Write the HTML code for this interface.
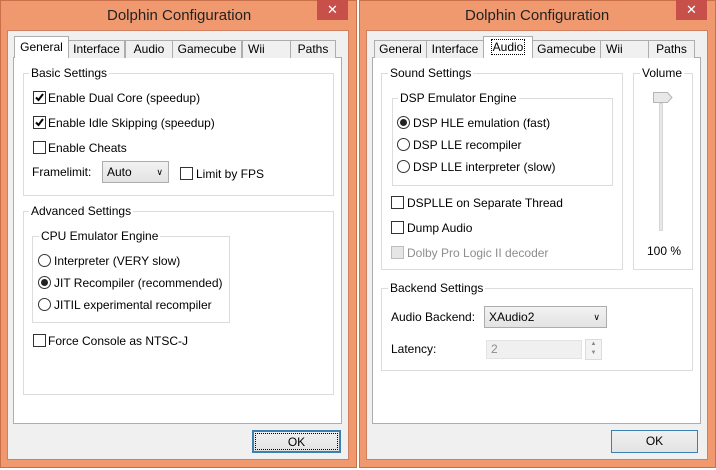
<!DOCTYPE html>
<html><head><meta charset="utf-8"><style>
*{box-sizing:border-box;margin:0;padding:0}
body{width:716px;height:470px;background:#fff;position:relative;overflow:hidden;font-family:"Liberation Sans",sans-serif;font-size:12px;color:#000}
.a{position:absolute}
.win{position:absolute;background:#f0996f;border:1px solid #c9704a}
.cl{position:absolute;background:#f0f0f0;border:1px solid #d08060}
.title{position:absolute;font-size:15px;color:#222;white-space:nowrap}
.close{position:absolute;background:#c7504a;color:#fff;text-align:center;font-size:13px;line-height:20px}
.panel{position:absolute;background:#fff;border:1px solid #adadad}
.tab{position:absolute;background:#f0f0f0;border:1px solid #adadad;border-bottom:none;text-align:center;line-height:17px;white-space:nowrap}
.tab.sel{background:#fff;z-index:2}
.gb{position:absolute;border:1px solid #dcdcdc}
.gl{position:absolute;background:#fff;padding:0 2px;white-space:nowrap;line-height:14px}
.t{position:absolute;white-space:nowrap;line-height:14px}
.cb{position:absolute;width:13px;height:13px;border:1px solid #333;background:#fff}
.cb.dis{border-color:#bcbcbc;background:#e6e6e6}
.rb{position:absolute;width:13px;height:13px;border:1px solid #333;border-radius:50%;background:#fff}
.rb.on::after{content:"";position:absolute;left:2px;top:2px;width:7px;height:7px;border-radius:50%;background:#222}
.sel-box{position:absolute;background:linear-gradient(#f2f2f2,#e3e3e3);border:1px solid #acacac;padding-left:4px;line-height:20px}
.btn{position:absolute;background:linear-gradient(#f0f0f0,#e3e3e3);border:1px solid #3c7fb1;text-align:center;line-height:20px}
</style></head><body>

<!-- LEFT WINDOW -->
<div class="win" style="left:0;top:0;width:357px;height:468px"></div>
<div class="cl" style="left:7px;top:30px;width:342px;height:430px"></div>
<div class="title" style="left:107px;top:7px">Dolphin Configuration</div>
<div class="close" style="left:317px;top:0;width:31px;height:20px">✕</div>
<div class="panel" style="left:13px;top:57px;width:329px;height:367px"></div>
<div class="tab sel" style="left:14px;top:36px;width:55px;height:22px;line-height:20px">General</div>
<div class="tab" style="left:68px;top:40px;width:57px;height:18px">Interface</div>
<div class="tab" style="left:125px;top:40px;width:48px;height:18px">Audio</div>
<div class="tab" style="left:172px;top:40px;width:70px;height:18px">Gamecube</div>
<div class="tab" style="left:242px;top:40px;width:49px;height:18px;text-align:left;padding-left:5px">Wii</div>
<div class="tab" style="left:290px;top:40px;width:46px;height:18px">Paths</div>

<div class="gb" style="left:23px;top:73px;width:311px;height:123px"></div>
<div class="gl" style="left:29px;top:66px">Basic Settings</div>
<div class="cb" style="left:33px;top:91px"></div>
<svg class="a" style="left:33px;top:91px" width="13" height="13"><path d="M3 6.5L5.5 9L10 3" fill="none" stroke="#000" stroke-width="2"/></svg>
<div class="t" style="left:48px;top:91px">Enable Dual Core (speedup)</div>
<div class="cb" style="left:33px;top:116px"></div>
<svg class="a" style="left:33px;top:116px" width="13" height="13"><path d="M3 6.5L5.5 9L10 3" fill="none" stroke="#000" stroke-width="2"/></svg>
<div class="t" style="left:48px;top:116px">Enable Idle Skipping (speedup)</div>
<div class="cb" style="left:33px;top:141px"></div>
<div class="t" style="left:48px;top:141px">Enable Cheats</div>
<div class="t" style="left:32px;top:165px">Framelimit:</div>
<div class="sel-box" style="left:102px;top:161px;width:67px;height:22px">Auto<span style="position:absolute;right:5px;font-size:9px">&#8744;</span></div>
<div class="cb" style="left:180px;top:167px"></div>
<div class="t" style="left:196px;top:167px">Limit by FPS</div>

<div class="gb" style="left:23px;top:211px;width:311px;height:184px"></div>
<div class="gl" style="left:29px;top:204px">Advanced Settings</div>
<div class="gb" style="left:32px;top:236px;width:198px;height:87px"></div>
<div class="gl" style="left:39px;top:229px">CPU Emulator Engine</div>
<div class="rb" style="left:38px;top:254px"></div><div class="t" style="left:54px;top:254px">Interpreter (VERY slow)</div>
<div class="rb on" style="left:38px;top:276px"></div><div class="t" style="left:54px;top:276px">JIT Recompiler (recommended)</div>
<div class="rb" style="left:38px;top:298px"></div><div class="t" style="left:54px;top:298px">JITIL experimental recompiler</div>
<div class="cb" style="left:33px;top:334px"></div>
<div class="t" style="left:48px;top:334px">Force Console as NTSC-J</div>

<div class="btn" style="left:252px;top:430px;width:89px;height:23px;border-width:2px;outline:1px dotted #000;outline-offset:-4px">OK</div>

<!-- RIGHT WINDOW -->
<div class="win" style="left:359px;top:0;width:357px;height:468px"></div>
<div class="cl" style="left:366px;top:30px;width:342px;height:430px"></div>
<div class="title" style="left:465px;top:7px">Dolphin Configuration</div>
<div class="close" style="left:676px;top:0;width:31px;height:20px">✕</div>
<div class="panel" style="left:372px;top:57px;width:329px;height:367px"></div>
<div class="tab" style="left:374px;top:40px;width:53px;height:18px">General</div>
<div class="tab" style="left:426px;top:40px;width:58px;height:18px">Interface</div>
<div class="tab sel" style="left:483px;top:36px;width:50px;height:22px;line-height:20px"><span style="outline:1px dotted #000;padding:0 1px">Audio</span></div>
<div class="tab" style="left:532px;top:40px;width:69px;height:18px">Gamecube</div>
<div class="tab" style="left:600px;top:40px;width:49px;height:18px;text-align:left;padding-left:5px">Wii</div>
<div class="tab" style="left:648px;top:40px;width:47px;height:18px">Paths</div>

<div class="gb" style="left:381px;top:73px;width:242px;height:197px"></div>
<div class="gl" style="left:388px;top:66px">Sound Settings</div>
<div class="gb" style="left:392px;top:98px;width:221px;height:88px"></div>
<div class="gl" style="left:398px;top:91px">DSP Emulator Engine</div>
<div class="rb on" style="left:397px;top:116px"></div><div class="t" style="left:413px;top:116px">DSP HLE emulation (fast)</div>
<div class="rb" style="left:397px;top:138px"></div><div class="t" style="left:413px;top:138px">DSP LLE recompiler</div>
<div class="rb" style="left:397px;top:160px"></div><div class="t" style="left:413px;top:160px">DSP LLE interpreter (slow)</div>
<div class="cb" style="left:391px;top:196px"></div><div class="t" style="left:407px;top:196px">DSPLLE on Separate Thread</div>
<div class="cb" style="left:391px;top:221px"></div><div class="t" style="left:407px;top:221px">Dump Audio</div>
<div class="cb dis" style="left:391px;top:246px"></div><div class="t" style="left:407px;top:246px;color:#8d8d8d">Dolby Pro Logic II decoder</div>

<div class="gb" style="left:633px;top:73px;width:60px;height:197px"></div>
<div class="gl" style="left:640px;top:66px">Volume</div>
<div class="a" style="left:659px;top:103px;width:4px;height:128px;background:#e7e7e7;border:1px solid #d6d6d6"></div>
<svg class="a" style="left:653px;top:92px" width="20" height="12"><path d="M0.5 0.5H14.5L19 5.5L14.5 10.5H0.5Z" fill="#e8e8e8" stroke="#b5b5b5"/></svg>
<div class="t" style="left:647px;top:244px">100 %</div>

<div class="gb" style="left:381px;top:288px;width:312px;height:83px"></div>
<div class="gl" style="left:388px;top:281px">Backend Settings</div>
<div class="t" style="left:391px;top:310px">Audio Backend:</div>
<div class="sel-box" style="left:484px;top:306px;width:123px;height:22px">XAudio2<span style="position:absolute;right:6px;font-size:9px">&#8744;</span></div>
<div class="t" style="left:391px;top:342px">Latency:</div>
<div class="a" style="left:486px;top:340px;width:96px;height:19px;background:#f0f0f0;border:1px solid #e3e3e3;color:#8d8d8d;padding-left:4px;line-height:17px">2</div>
<div class="a" style="left:585px;top:339px;width:17px;height:21px;border:1px solid #dcdcdc;background:#f3f3f3;font-size:6px;color:#888;text-align:center;line-height:9px">▲<br>▼</div>

<div class="btn" style="left:611px;top:430px;width:87px;height:23px">OK</div>
</body></html>
